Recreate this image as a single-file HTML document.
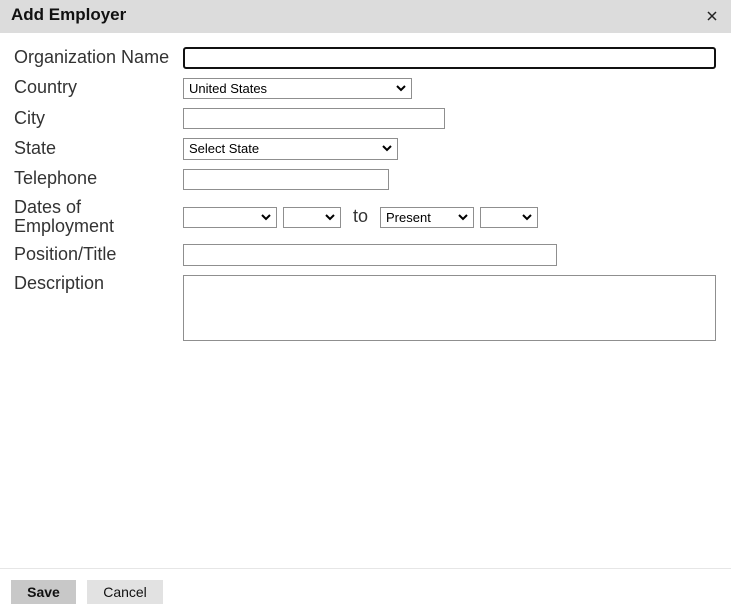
<html><head><style>
body{margin:0;width:731px;height:614px;background:#fff;font-family:"Liberation Sans",sans-serif;position:relative;overflow:hidden}
.a{position:absolute}
.hd{left:0;top:0;width:731px;height:33px;background:#dcdcdc}
.t{left:11px;top:5px;font-size:17px;font-weight:bold;color:#111}
.l{left:14px;font-size:18px;color:#333;line-height:19px}
.i{border:1px solid #8f8f8f;box-sizing:border-box;background:#fff}
.s{border:1px solid #8f8f8f;box-sizing:border-box;background:#fff;font-size:13px;color:#000;padding:2px 5px;line-height:15px}
.s svg{position:absolute;right:5px;top:6px}
.btn{top:580px;height:24px;font-size:14px;text-align:center;line-height:24px;color:#111}
</style></head><body>
<div class="a hd"></div>
<div class="a t">Add Employer</div>
<svg class="a" style="left:707px;top:11px" width="10" height="10"><path d="M1 1L9 9M9 1L1 9" stroke="#222" stroke-width="1.5"/></svg>
<div class="a l" style="top:48px">Organization Name</div>
<div class="a l" style="top:78px">Country</div>
<div class="a l" style="top:109px">City</div>
<div class="a l" style="top:139px">State</div>
<div class="a l" style="top:169px">Telephone</div>
<div class="a l" style="top:198px">Dates of<br>Employment</div>
<div class="a l" style="top:245px">Position/Title</div>
<div class="a l" style="top:274px">Description</div>
<div class="a" style="left:183px;top:47px;width:533px;height:22px;border:2px solid #111;border-radius:3px;box-sizing:border-box"></div>
<div class="a s" style="left:183px;top:78px;width:229px;height:21px">United States<svg width="10" height="7"><path d="M1 1l4 4 4-4" stroke="#000" stroke-width="2" fill="none"/></svg></div>
<div class="a i" style="left:183px;top:108px;width:262px;height:21px"></div>
<div class="a s" style="left:183px;top:138px;width:215px;height:22px">Select State<svg width="10" height="7"><path d="M1 1l4 4 4-4" stroke="#000" stroke-width="2" fill="none"/></svg></div>
<div class="a i" style="left:183px;top:169px;width:206px;height:21px"></div>
<div class="a s" style="left:183px;top:207px;width:94px;height:21px"><svg width="10" height="7"><path d="M1 1l4 4 4-4" stroke="#000" stroke-width="2" fill="none"/></svg></div>
<div class="a s" style="left:283px;top:207px;width:58px;height:21px"><svg width="10" height="7"><path d="M1 1l4 4 4-4" stroke="#000" stroke-width="2" fill="none"/></svg></div>
<div class="a" style="left:353px;top:206px;font-size:18px;color:#333">to</div>
<div class="a s" style="left:380px;top:207px;width:94px;height:21px">Present<svg width="10" height="7"><path d="M1 1l4 4 4-4" stroke="#000" stroke-width="2" fill="none"/></svg></div>
<div class="a s" style="left:480px;top:207px;width:58px;height:21px"><svg width="10" height="7"><path d="M1 1l4 4 4-4" stroke="#000" stroke-width="2" fill="none"/></svg></div>
<div class="a i" style="left:183px;top:244px;width:374px;height:22px"></div>
<div class="a i" style="left:183px;top:275px;width:533px;height:66px"></div>
<div class="a" style="left:0;top:568px;width:731px;height:1px;background:#e6e6e6"></div>
<div class="a btn" style="left:11px;width:65px;background:#c8c8c8;font-weight:bold">Save</div>
<div class="a btn" style="left:87px;width:76px;background:#e2e2e2">Cancel</div>
</body></html>
